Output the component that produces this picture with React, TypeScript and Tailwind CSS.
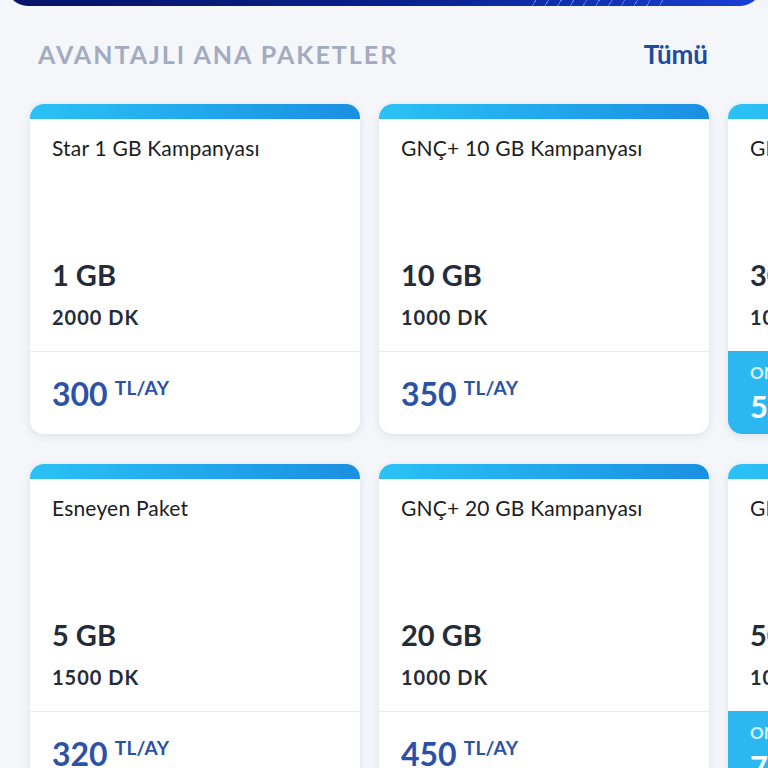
import React from "react";

type Pkg = {
  title: string;
  data: string;
  minutes: string;
  price: string;
  online?: boolean;
};

const ROW1: Pkg[] = [
  { title: "Star 1 GB Kampanyası", data: "1 GB", minutes: "2000 DK", price: "300" },
  { title: "GNÇ+ 10 GB Kampanyası", data: "10 GB", minutes: "1000 DK", price: "350" },
  { title: "GNÇ+ 30 GB Kampanyası", data: "30 GB", minutes: "1000 DK", price: "500", online: true },
];

const ROW2: Pkg[] = [
  { title: "Esneyen Paket", data: "5 GB", minutes: "1500 DK", price: "320" },
  { title: "GNÇ+ 20 GB Kampanyası", data: "20 GB", minutes: "1000 DK", price: "450" },
  { title: "GNÇ+ 50 GB Kampanyası", data: "50 GB", minutes: "1000 DK", price: "700", online: true },
];

function PackageCard({ pkg }: { pkg: Pkg }) {
  return (
    <div className="w-[330px] h-[330px] shrink-0 rounded-[14px] bg-white shadow-[0_2px_8px_rgba(20,40,80,0.10)] flex flex-col overflow-hidden">
      <div className="h-[15px] bg-gradient-to-r from-[#2bc2f6] to-[#1b8fe1]" />
      <div className="flex-1 flex flex-col px-[22px] pt-[16px]">
        <p className="text-[21px] leading-[26px] text-[#1b1d22] tracking-[0.2px]">{pkg.title}</p>
        <div className="flex-1" />
        <p className="text-[29px] leading-[34px] font-bold text-[#252c38]">{pkg.data}</p>
        <p className="text-[20px] leading-[24px] font-bold text-[#252c38] mt-[13px] mb-[22px] tracking-[1px]">
          {pkg.minutes}
        </p>
      </div>
      {pkg.online ? (
        <div className="h-[83px] shrink-0 bg-[#2db7f1] px-[22px] pt-[11px] text-white">
          <p className="text-[17px] leading-[22px] font-bold text-white/80">ONLİNE'A ÖZEL</p>
          <p className="text-[31px] leading-[36px] font-bold mt-[4px]">
            {pkg.price}
            <span className="text-[18px] align-top ml-[6px]">TL/AY</span>
          </p>
        </div>
      ) : (
        <div className="h-[83px] shrink-0 border-t border-[#e6e9ef] px-[22px] pt-[24px]">
          <p className="text-[32px] leading-[36px] font-bold text-[#2b52a6] flex items-start">
            {pkg.price}
            <span className="text-[19px] leading-[20px] ml-[7px] mt-[2px] tracking-[0.3px]">TL/AY</span>
          </p>
        </div>
      )}
    </div>
  );
}

export default function App() {
  return (
    <div
      className="w-[768px] h-[768px] overflow-hidden bg-[#f4f6f9]"
      style={{ fontFamily: "Lato, 'Noto Sans', sans-serif" }}
    >
      {/* bottom edge of the hero banner */}
      <div className="h-[6px] overflow-hidden flex flex-col justify-end px-[6px]">
        <div className="h-[60px] shrink-0 rounded-b-[22px] bg-gradient-to-r from-[#061468] via-[#0a1f8a] to-[#1a3fd6] relative overflow-hidden">
          <div className="absolute bottom-0 left-[520px] w-[140px] h-[10px] bg-[repeating-linear-gradient(120deg,transparent_0_10px,rgba(90,160,255,0.7)_10px_11px)]" />
        </div>
      </div>

      <div className="flex items-center justify-between pl-[38px] pr-[60px] pt-[32px] pb-[34px]">
        <h2 className="text-[25px] leading-[32px] font-bold tracking-[2px] text-[#a3abc0]">
          AVANTAJLI ANA PAKETLER
        </h2>
        <span className="text-[26px] leading-[32px] font-bold text-[#1d4b9e]">Tümü</span>
      </div>

      <div className="flex flex-col gap-[30px] pl-[30px]">
        <div className="flex gap-[19px]">
          {ROW1.map((p) => (
            <PackageCard key={p.title} pkg={p} />
          ))}
        </div>
        <div className="flex gap-[19px]">
          {ROW2.map((p) => (
            <PackageCard key={p.title} pkg={p} />
          ))}
        </div>
      </div>
    </div>
  );
}
